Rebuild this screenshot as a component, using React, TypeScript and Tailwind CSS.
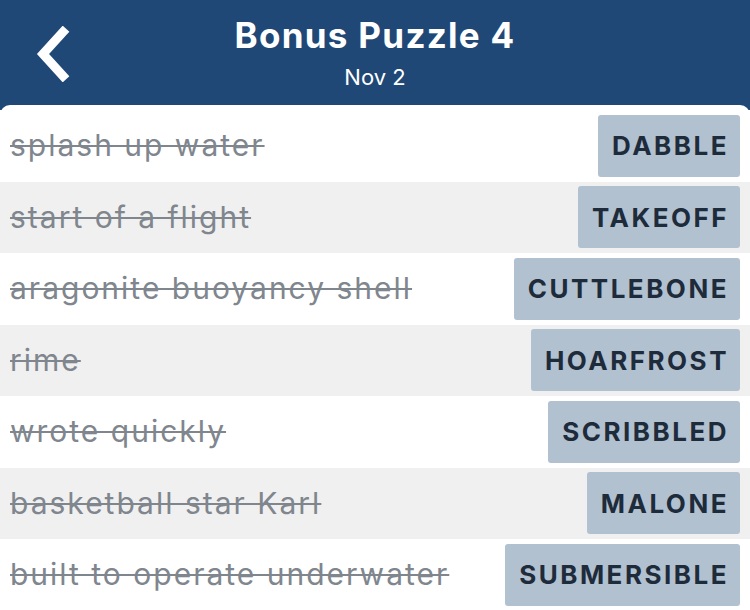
const clues = [
    { clue: 'splash up water', answer: 'DABBLE' },
    { clue: 'start of a flight', answer: 'TAKEOFF' },
    { clue: 'aragonite buoyancy shell', answer: 'CUTTLEBONE' },
    { clue: 'rime', answer: 'HOARFROST' },
    { clue: 'wrote quickly', answer: 'SCRIBBLED' },
    { clue: 'basketball star Karl', answer: 'MALONE' },
    { clue: 'built to operate underwater', answer: 'SUBMERSIBLE' },
]

export default function App() {
    return (
        <div className="w-[750px] h-[610px] overflow-hidden bg-[#1f4877] font-['Inter',sans-serif]">
            {/* Header */}
            <div className="relative h-[105px] flex flex-col items-center text-white">
                <button className="absolute left-[30px] top-[24px] w-[48px] h-[60px] flex items-center justify-center">
                    <svg width="40" height="56" viewBox="0 0 40 56" fill="none">
                        <path d="M29 6 L9 28 L29 50" stroke="white" strokeWidth="9" strokeLinecap="square" strokeLinejoin="miter" />
                    </svg>
                </button>
                <h1 className="mt-[14px] text-[35px] leading-[42px] font-bold tracking-[1.3px]">Bonus Puzzle 4</h1>
                <p className="mt-[8px] text-[22px] leading-[26px]">Nov 2</p>
            </div>

            {/* List */}
            <div className="bg-white rounded-t-[10px] pt-[5px]">
                {clues.map((c, i) => (
                    <div
                        key={c.answer}
                        className={`h-[71.5px] flex items-center justify-between pl-[10px] pr-[10px] ${i % 2 === 1 ? 'bg-[#f0f0f0]' : 'bg-white'}`}
                    >
                        <span className="text-[30px] tracking-[2px] text-[#80868e] line-through decoration-[#80868e] decoration-2">{c.clue}</span>
                        <div className="h-[62px] pl-[14px] pr-[11px] flex items-center bg-[#b1c1d0] rounded-[3px] text-[26px] font-bold tracking-[2.5px] text-[#1e2b3b]">
                            {c.answer}
                        </div>
                    </div>
                ))}
            </div>
        </div>
    )
}
